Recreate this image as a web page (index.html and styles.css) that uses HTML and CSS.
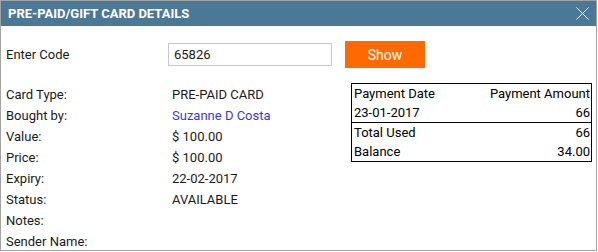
FILE: index.html
```html
<!DOCTYPE html>
<html lang="en">
<head>
  <meta charset="UTF-8" />
  <title>Pre-Paid/Gift Card Details</title>
  <link rel="stylesheet" href="styles.css">
</head>
<body>
  <div class="dialog">
    <div class="dialog-header">
      <span class="dialog-title">PRE-PAID/GIFT CARD DETAILS</span>
      <button class="close-btn" aria-label="Close">
        <svg width="13" height="13" viewBox="0 0 13 13">
          <path d="M0.5 0.5 L12.5 12.5 M12.5 0.5 L0.5 12.5" stroke="#fff" stroke-width="1" fill="none"/>
        </svg>
      </button>
    </div>

    <div class="dialog-body">
      <div class="code-row">
        <label class="code-label" for="code">Enter Code</label>
        <input type="text" id="code" class="code-input" value="65826">
        <button class="show-btn">Show</button>
      </div>

      <div class="details">
        <div class="info">
          <span class="info-label">Card Type:</span><span>PRE-PAID CARD</span>
          <span class="info-label">Bought by:</span><a href="#" class="buyer">Suzanne D Costa</a>
          <span class="info-label">Value:</span><span>$ 100.00</span>
          <span class="info-label">Price:</span><span>$ 100.00</span>
          <span class="info-label">Expiry:</span><span>22-02-2017</span>
          <span class="info-label">Status:</span><span>AVAILABLE</span>
          <span class="info-label">Notes:</span><span></span>
          <span class="info-label">Sender Name:</span><span></span>
        </div>

        <table class="payments">
          <tr>
            <th>Payment Date</th>
            <th class="num">Payment Amount</th>
          </tr>
          <tr>
            <td>23-01-2017</td>
            <td class="num">66</td>
          </tr>
          <tr class="summary">
            <td>Total Used</td>
            <td class="num">66</td>
          </tr>
          <tr>
            <td>Balance</td>
            <td class="num">34.00</td>
          </tr>
        </table>
      </div>
    </div>
  </div>
</body>
</html>
```

FILE: styles.css
```css
body {
  margin: 0;
  font-family: Roboto, "Liberation Sans", sans-serif;
  font-size: 13px;
  color: #1a1a1a;
  background: #fff;
}
.dialog {
  box-sizing: border-box;
  width: 597px;
  height: 251px;
  border: 1px solid #a3a3a3;
  overflow: hidden;
}
.dialog-header {
  display: flex;
  align-items: center;
  justify-content: space-between;
  height: 25px;
  padding: 0 7px 0 7px;
  background: #4a7896;
}
.dialog-title {
  color: #fff;
  font-weight: bold;
  font-size: 13px;
}
.close-btn {
  display: flex;
  padding: 0;
  border: none;
  background: none;
  cursor: pointer;
}
.dialog-body {
  padding: 15px 0 0 5px;
}
.code-row {
  display: flex;
  align-items: center;
  height: 27px;
}
.code-label {
  width: 162px;
}
.code-input {
  box-sizing: border-box;
  width: 164px;
  height: 23px;
  padding: 0 5px;
  border: 1px solid #c8c8c8;
  font-family: inherit;
  font-size: 13px;
  color: #1a1a1a;
}
.show-btn {
  width: 80px;
  height: 27px;
  margin-left: 13px;
  border: none;
  background: #ff6a00;
  color: #fff;
  font-family: inherit;
  font-size: 14px;
  cursor: pointer;
}
.details {
  display: flex;
  align-items: flex-start;
  margin-top: 15px;
}
.info {
  display: grid;
  grid-template-columns: 166px 170px;
  grid-auto-rows: 21px;
  align-items: center;
  margin-top: 1px;
}
.buyer {
  color: #3838e8;
  text-decoration: none;
}
.payments {
  box-sizing: border-box;
  width: 241px;
  margin-left: 9px;
  border: 1px solid #000;
  border-collapse: collapse;
  color: #000;
}
.payments th,
.payments td {
  height: 19px;
  padding: 0 1px 0 2px;
  font-weight: normal;
  text-align: left;
}
.payments .num {
  text-align: right;
}
.summary td {
  border-top: 1px solid #000;
}
```
